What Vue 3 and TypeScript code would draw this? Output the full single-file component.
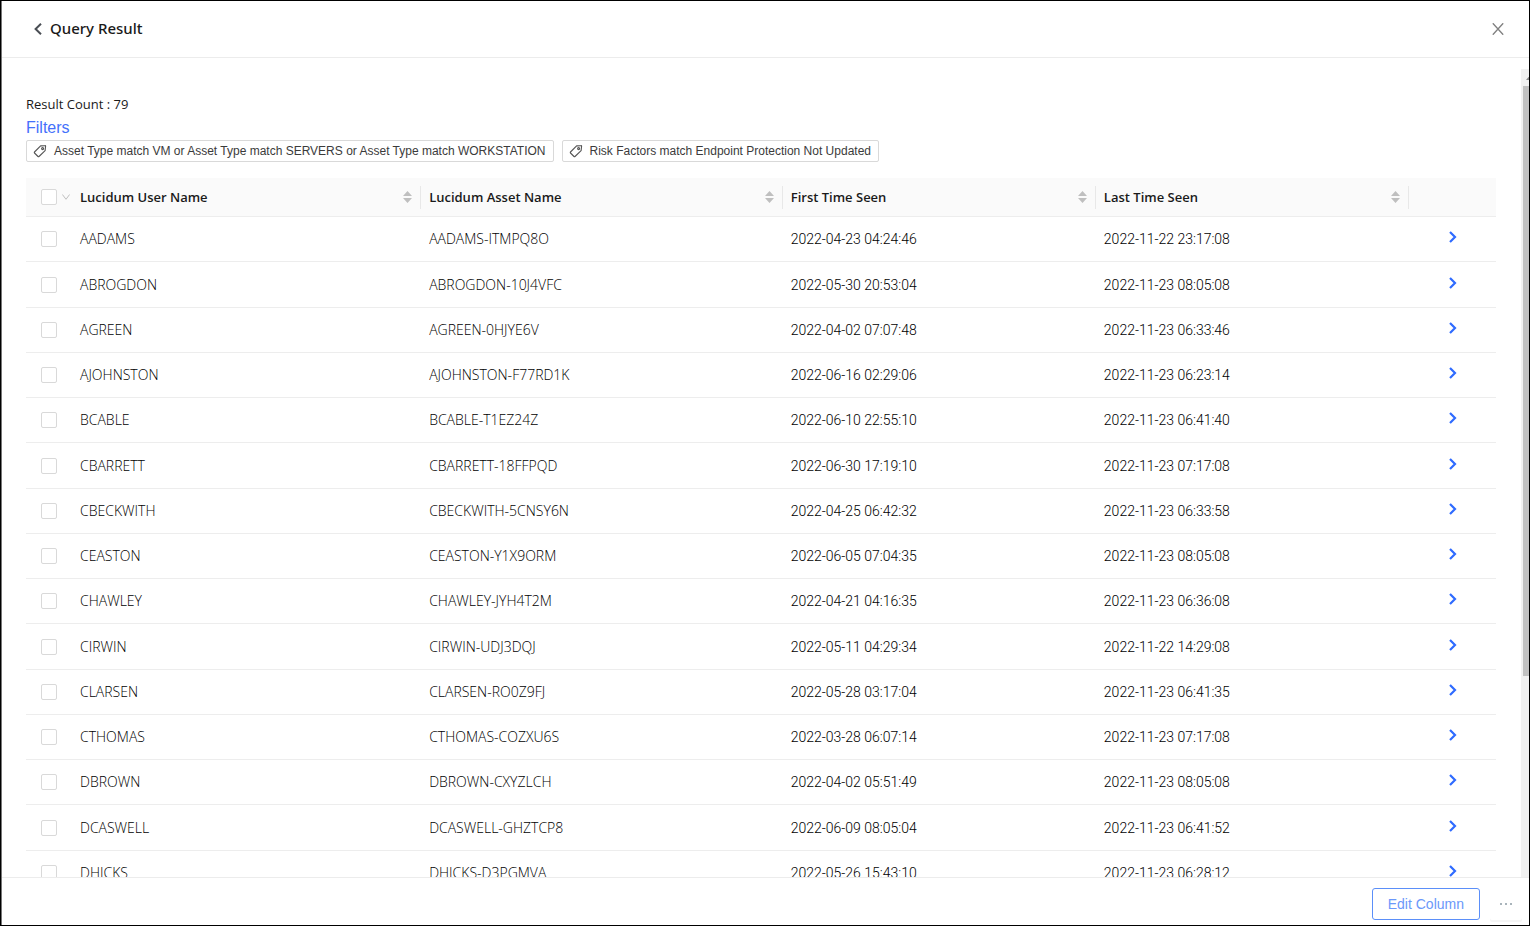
<script setup lang="ts">
import { ref } from 'vue'

interface Row {
  user: string
  asset: string
  first: string
  last: string
}

const columns = ['Lucidum User Name', 'Lucidum Asset Name', 'First Time Seen', 'Last Time Seen']

const filters = [
  'Asset Type match VM or Asset Type match SERVERS or Asset Type match WORKSTATION',
  'Risk Factors match Endpoint Protection Not Updated',
]

const rows: Row[] = [
  { user: 'AADAMS', asset: 'AADAMS-ITMPQ8O', first: '2022-04-23 04:24:46', last: '2022-11-22 23:17:08' },
  { user: 'ABROGDON', asset: 'ABROGDON-10J4VFC', first: '2022-05-30 20:53:04', last: '2022-11-23 08:05:08' },
  { user: 'AGREEN', asset: 'AGREEN-0HJYE6V', first: '2022-04-02 07:07:48', last: '2022-11-23 06:33:46' },
  { user: 'AJOHNSTON', asset: 'AJOHNSTON-F77RD1K', first: '2022-06-16 02:29:06', last: '2022-11-23 06:23:14' },
  { user: 'BCABLE', asset: 'BCABLE-T1EZ24Z', first: '2022-06-10 22:55:10', last: '2022-11-23 06:41:40' },
  { user: 'CBARRETT', asset: 'CBARRETT-18FFPQD', first: '2022-06-30 17:19:10', last: '2022-11-23 07:17:08' },
  { user: 'CBECKWITH', asset: 'CBECKWITH-5CNSY6N', first: '2022-04-25 06:42:32', last: '2022-11-23 06:33:58' },
  { user: 'CEASTON', asset: 'CEASTON-Y1X9ORM', first: '2022-06-05 07:04:35', last: '2022-11-23 08:05:08' },
  { user: 'CHAWLEY', asset: 'CHAWLEY-JYH4T2M', first: '2022-04-21 04:16:35', last: '2022-11-23 06:36:08' },
  { user: 'CIRWIN', asset: 'CIRWIN-UDJ3DQJ', first: '2022-05-11 04:29:34', last: '2022-11-22 14:29:08' },
  { user: 'CLARSEN', asset: 'CLARSEN-RO0Z9FJ', first: '2022-05-28 03:17:04', last: '2022-11-23 06:41:35' },
  { user: 'CTHOMAS', asset: 'CTHOMAS-COZXU6S', first: '2022-03-28 06:07:14', last: '2022-11-23 07:17:08' },
  { user: 'DBROWN', asset: 'DBROWN-CXYZLCH', first: '2022-04-02 05:51:49', last: '2022-11-23 08:05:08' },
  { user: 'DCASWELL', asset: 'DCASWELL-GHZTCP8', first: '2022-06-09 08:05:04', last: '2022-11-23 06:41:52' },
  { user: 'DHICKS', asset: 'DHICKS-D3PGMVA', first: '2022-05-26 15:43:10', last: '2022-11-23 06:28:12' },
]

const selected = ref<string[]>([])

function toggleAll(event: Event) {
  selected.value = (event.target as HTMLInputElement).checked ? rows.map((row) => row.user) : []
}
</script>

<template>
  <div class="drawer">
    <header class="head">
      <button class="back" type="button" aria-label="Back">
        <svg width="8" height="12" viewBox="0 0 8 12"><path d="M7 .8 1.600 6 7 11.200" fill="none" stroke="#4a4e54" stroke-width="2" /></svg>
      </button>
      <h1 class="title">Query Result</h1>
      <button class="close" type="button" aria-label="Close">
        <svg width="12" height="12" viewBox="0 0 12 12"><path d="M.8.3 11.2 11.7M11.2.3.8 11.7" fill="none" stroke="#808080" stroke-width="1.4" /></svg>
      </button>
    </header>

    <main class="body">
      <section class="content">
        <p class="count">Result Count : 79</p>
        <a class="filters" href="#">Filters</a>
        <ul class="tags">
          <li v-for="filter in filters" :key="filter" class="tag">
            <svg width="14" height="14" viewBox="0 0 14 14" fill="none" stroke="#555" stroke-width="1.1" stroke-linejoin="round">
              <path d="M7.6 1.9 12 1.6a.5.5 0 0 1 .6.6L12.1 6.6 6 12.5a.7.7 0 0 1-1 0L1.5 9a.7.7 0 0 1 0-1z" />
              <circle cx="9.6" cy="4.6" r="1" />
            </svg>
            <span>{{ filter }}</span>
          </li>
        </ul>

        <table class="table">
          <colgroup>
            <col class="c-check" />
            <col class="c-user" />
            <col class="c-asset" />
            <col class="c-time" />
            <col class="c-time" />
            <col class="c-open" />
          </colgroup>
          <thead>
            <tr>
              <th class="check">
                <div class="check-head">
                  <input type="checkbox" aria-label="Select all" :checked="selected.length === rows.length" @change="toggleAll" />
                  <button class="menu" type="button" aria-label="Selection options">
                    <svg width="8" height="6" viewBox="0 0 8 6"><path d="M.4.5 4 5.3 7.6.5" fill="none" stroke="#bfbfbf" /></svg>
                  </button>
                </div>
              </th>
              <th v-for="column in columns" :key="column">
                <div class="th">
                  <span>{{ column }}</span>
                  <button class="sort" type="button" :aria-label="'Sort by ' + column">
                    <svg width="9" height="12" viewBox="0 0 9 12" fill="#bfbfbf"><path d="M4.5 0 9 5H0zM0 7h9l-4.500 5z" /></svg>
                  </button>
                </div>
              </th>
              <th></th>
            </tr>
          </thead>
          <tbody>
            <tr v-for="row in rows" :key="row.user">
              <td class="check"><input v-model="selected" type="checkbox" :value="row.user" :aria-label="'Select ' + row.user" /></td>
              <td>{{ row.user }}</td>
              <td>{{ row.asset }}</td>
              <td class="time">{{ row.first }}</td>
              <td class="time">{{ row.last }}</td>
              <td class="open">
                <button type="button" :aria-label="'Open ' + row.user">
                  <svg width="8" height="12" viewBox="0 0 8 12"><path d="M1 1l5 5-5 5" fill="none" stroke="#2f6bff" stroke-width="2.200" /></svg>
                </button>
              </td>
            </tr>
          </tbody>
        </table>
      </section>
      <div class="scrollbar" aria-hidden="true">
        <div class="arrow">
          <svg width="7" height="4" viewBox="0 0 7 4"><path d="M3.500 0 7 4H0z" fill="#8a8a8a" /></svg>
        </div>
        <div class="thumb"></div>
      </div>
    </main>

    <footer class="foot">
      <button class="edit" type="button">Edit Column</button>
      <button class="more" type="button" aria-label="More">
        <svg width="14" height="2" viewBox="0 0 14 2" fill="#a9b4bb"><path d="M1 0h2v2H1zM6 0h2v2H6zM11 0h2v2h-2z" /></svg>
      </button>
    </footer>
  </div>
</template>

<style>
body {
  margin: 0;
}
</style>

<style scoped>
.drawer {
  box-sizing: border-box;
  display: flex;
  flex-direction: column;
  height: 100vh;
  overflow: hidden;
  padding-left: 1px;
  border: 1px solid #000;
  background: #fff;
  box-shadow: inset 1px 0 #777;
  color: #1a1a1a;
  font: 14px/22px "Open Sans", "Noto Sans", sans-serif;
}
button {
  display: flex;
  align-items: center;
  justify-content: center;
  padding: 0;
  border: 0;
  background: none;
  cursor: pointer;
}
svg {
  display: block;
  flex: none;
}
.head {
  display: flex;
  flex: none;
  align-items: center;
  height: 56px;
  padding: 0 25px 0 32px;
  border-bottom: 1px solid #ececec;
}
.title {
  flex: 1;
  margin: 0 0 0 8px;
  padding-bottom: 2px;
  font: 500 15px/22px "Noto Sans", "Open Sans", sans-serif;
}
.body {
  display: flex;
  flex: 1;
  min-height: 0;
}
.content {
  flex: 1;
  min-width: 0;
  overflow: hidden;
  padding: 34px 25px 0 24px;
}
.count {
  margin: 0;
  font-size: 13px;
  line-height: 24px;
}
.filters {
  display: block;
  width: max-content;
  color: #4470fb;
  font: 16px/24px "Liberation Sans", Arial, sans-serif;
  text-decoration: none;
}
.tags {
  display: flex;
  flex-wrap: wrap;
  gap: 8px;
  margin: 0 0 16px;
  padding: 0;
  list-style: none;
}
.tag {
  display: flex;
  align-items: center;
  gap: 7px;
  padding: 0 7px 0 6px;
  border: 1px solid #d9d9d9;
  border-radius: 2px;
  color: #3b3b3b;
  font: 12px/20px "Liberation Sans", Arial, sans-serif;
}
.table {
  width: 100%;
  border-collapse: separate;
  border-spacing: 0;
  table-layout: fixed;
}
.c-check {
  width: 46px;
}
.c-user {
  width: 23.75%;
}
.c-asset {
  width: 24.6%;
}
.c-time {
  width: 21.3%;
}
.table th {
  height: 38px;
  padding: 0 0 0 8px;
  border-bottom: 1px solid #ededed;
  background: #fafafa;
  font: 600 13px/22px "Open Sans", sans-serif;
  text-align: left;
}
.th {
  display: flex;
  align-items: center;
  justify-content: space-between;
  height: 23px;
  padding-right: 8px;
  border-right: 1px solid #e8e8e8;
}
.table td {
  height: 44px;
  padding: 0 8px;
  border-bottom: 1px solid #ededed;
  color: #000;
  font-weight: 300;
}
.table tbody tr:nth-child(4n + 2) td {
  height: 45px;
}
.table td.time {
  font-family: Roboto, sans-serif;
}
.table .check {
  padding: 0 0 0 15px;
}
.check-head {
  display: flex;
  align-items: center;
  gap: 5px;
}
input[type="checkbox"] {
  display: block;
  box-sizing: border-box;
  width: 16px;
  height: 16px;
  margin: 0;
  border: 1px solid #d9d9d9;
  border-radius: 2px;
  background: #fff;
  appearance: none;
}
input[type="checkbox"]:checked {
  border-color: #2f6bff;
  background: #2f6bff;
}
.table td.open {
  padding: 0 39px 4px 0;
  height: 40px;
}
.table tbody tr:nth-child(4n + 2) td.open {
  height: 41px;
}
.open button {
  margin-left: auto;
}
.scrollbar {
  display: flex;
  flex: none;
  flex-direction: column;
  box-sizing: border-box;
  width: 8px;
  margin-top: 11px;
  padding-left: 2px;
  overflow: hidden;
  background: #f1f1f1;
}
.arrow {
  display: flex;
  align-items: center;
  height: 17px;
  padding-left: 3px;
}
.thumb {
  height: 73%;
  background: #c1c1c1;
}
.foot {
  display: flex;
  flex: none;
  align-items: center;
  justify-content: flex-end;
  gap: 10px;
  height: 48px;
  padding: 5px 7px 0 0;
  box-sizing: border-box;
  border-top: 1px solid #ececec;
}
.edit {
  box-sizing: border-box;
  height: 32px;
  padding: 0 15px;
  border: 1px solid #5b8ff9;
  border-radius: 3px;
  color: #6b98fa;
  font: 14px/30px "Liberation Sans", Arial, sans-serif;
}
.more {
  width: 32px;
  height: 32px;
  border-radius: 2px;
  box-shadow: 0 2px 0 #f5f5f5;
}
</style>
